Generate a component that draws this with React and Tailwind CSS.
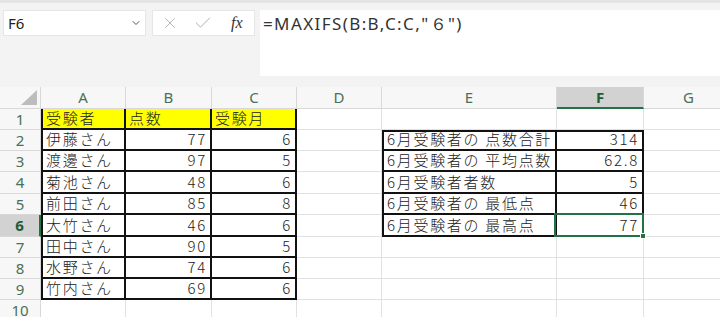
import { ChevronDown, X, Check } from "lucide-react"

const COLS = [
  { key: "A", w: 85 },
  { key: "B", w: 86 },
  { key: "C", w: 85 },
  { key: "D", w: 85 },
  { key: "E", w: 175 },
  { key: "F", w: 87 },
  { key: "G", w: 90 },
]

const ROW_H = [21, 21, 21, 22, 21, 22, 21, 21, 21, 21]

const DATA = [
  ["受験者", "点数", "受験月", "", "", ""],
  ["伊藤さん", "77", "6", "", "6月受験者の 点数合計", "314"],
  ["渡邊さん", "97", "5", "", "6月受験者の 平均点数", "62.8"],
  ["菊池さん", "48", "6", "", "6月受験者者数", "5"],
  ["前田さん", "85", "8", "", "6月受験者の 最低点", "46"],
  ["大竹さん", "46", "6", "", "6月受験者の 最高点", "77"],
  ["田中さん", "90", "5", "", "", ""],
  ["水野さん", "74", "6", "", "", ""],
  ["竹内さん", "69", "6", "", "", ""],
  ["", "", "", "", "", ""],
]

const cellFont = { fontFamily: '"Noto Sans CJK JP", sans-serif' }

const boxed = (r, c) => (r <= 8 && c <= 2) || (r >= 1 && r <= 5 && (c === 4 || c === 5))

const Cell = ({ r, c, w, h, text }) => {
  const inBox = boxed(r, c)
  const numeric = text !== "" && /^[0-9.]+$/.test(text)
  const yellow = r === 0 && c <= 2
  const selected = r === 5 && c === 5
  // first boxed column and first boxed row draw their own outer line
  const leftEdge = inBox && (c === 0 || c === 4)
  const topEdge = inBox && r === 1 && c >= 4

  return (
    <div
      className={`relative box-border shrink-0 flex items-end pb-[2px] leading-[16px] text-[15px] font-light tracking-[1.7px] text-[#222] ${
        numeric ? "justify-end pr-[3px]" : "justify-start pl-[3px]"
      } ${inBox ? "border-r-2 border-b-2 border-[#111]" : "border-r border-b border-[#e1e1e1]"} ${
        leftEdge ? "border-l-2" : ""
      } ${topEdge ? "border-t-2" : ""} ${yellow ? "bg-[#ffff00]" : "bg-white"} ${selected ? "z-10" : ""}`}
      style={{ ...cellFont, width: w, height: h, whiteSpace: "pre" }}
    >
      {text}
      {selected && (
        <>
          <div className="absolute z-20 -left-[3px] -top-[2px] -right-[2px] -bottom-[2px] border-2 border-[#217346]" />
          <div className="absolute z-30 -right-[4px] -bottom-[4px] w-[6px] h-[6px] bg-[#217346] border border-white" />
        </>
      )}
    </div>
  )
}

const App = () => {
  return (
    <div className="w-[720px] h-[317px] overflow-hidden bg-[#f3f3f3]" style={{ fontFamily: '"Noto Sans", sans-serif' }}>
      <div className="h-[3px] bg-[#e4e4e4]" />

      {/* formula bar */}
      <div className="flex items-start h-[84px] pt-[7px] pl-[3px]">
        <div className="w-[143px] h-[26px] bg-white border border-[#e6e6e6] flex items-center justify-between pl-[4px] pr-[3px]">
          <span className="text-[15px] text-[#222]">F6</span>
          <ChevronDown className="w-[12px] h-[12px] text-[#555]" strokeWidth={2} />
        </div>
        <div className="ml-[6px] w-[103px] h-[26px] bg-white border border-[#e6e6e6] flex items-center pl-[8px]">
          <X className="w-[18px] h-[18px] text-[#b0b0b0]" strokeWidth={1.2} />
          <Check className="ml-[14px] w-[20px] h-[20px] text-[#b0b0b0]" strokeWidth={1.2} />
          <span
            className="ml-[18px] text-[16px] italic text-[#333]"
            style={{ fontFamily: '"Liberation Serif", serif' }}
          >
            fx
          </span>
        </div>
        <div className="ml-[5px] flex-1 h-[66px] bg-white pl-[3px] pt-[1px]">
          <span className="text-[17px] text-[#333] tracking-[1.4px]">=MAXIFS(B:B,C:C,"６")</span>
        </div>
      </div>

      {/* column headers */}
      <div className="flex h-[22px] bg-[#f7f7f7]">
        <div className="relative w-[41px] shrink-0 box-border border-r border-b border-[#d8d8d8]">
          <svg className="absolute right-[3px] bottom-[3px]" width="16" height="15" viewBox="0 0 16 15">
            <polygon points="16,0 16,15 0,15" fill="#bdbdbd" />
          </svg>
        </div>
        {COLS.map((col) => {
          const sel = col.key === "F"
          return (
            <div
              key={col.key}
              className={`shrink-0 box-border flex items-center justify-center text-[15px] leading-none border-r ${
                sel
                  ? "bg-[#d2d2d2] border-b-2 border-b-[#217346] border-r-[#d8d8d8] font-bold text-[#1e5c37]"
                  : "border-b border-[#d8d8d8] text-[#4a7058]"
              }`}
              style={{ width: col.w }}
            >
              {col.key}
            </div>
          )
        })}
      </div>

      {/* rows */}
      {DATA.map((row, r) => {
        const sel = r === 5
        return (
          <div key={r} className="flex">
            <div
              className={`w-[41px] shrink-0 box-border flex items-center justify-center text-[15px] leading-none border-b border-[#d8d8d8] ${
                sel
                  ? "bg-[#d2d2d2] border-r-2 border-r-[#217346] font-bold text-[#1e5c37]"
                  : "bg-[#f7f7f7] border-r text-[#4a7058]"
              }`}
              style={{ height: ROW_H[r] }}
            >
              {r + 1}
            </div>
            {COLS.map((col, c) => (
              <Cell key={col.key} r={r} c={c} w={col.w} h={ROW_H[r]} text={c < 6 ? row[c] : ""} />
            ))}
          </div>
        )
      })}
    </div>
  )
}

export default App
